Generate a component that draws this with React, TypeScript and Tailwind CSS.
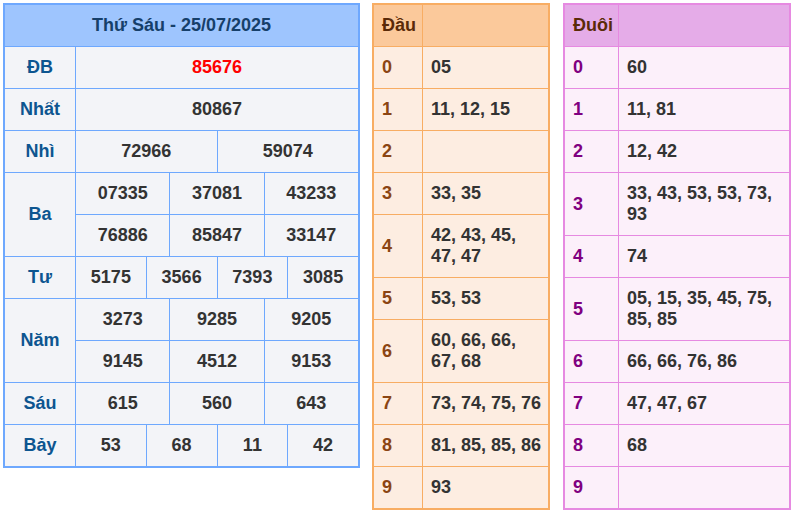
import React from 'react';

type Row = { label: string; values: string[]; span?: string; red?: boolean };

// each group of values fills the 12 columns of the number area
const groups: { label: string; lines: string[][]; red?: boolean }[] = [
  { label: 'ĐB', lines: [['85676']], red: true },
  { label: 'Nhất', lines: [['80867']] },
  { label: 'Nhì', lines: [['72966', '59074']] },
  { label: 'Ba', lines: [['07335', '37081', '43233'], ['76886', '85847', '33147']] },
  { label: 'Tư', lines: [['5175', '3566', '7393', '3085']] },
  { label: 'Năm', lines: [['3273', '9285', '9205'], ['9145', '4512', '9153']] },
  { label: 'Sáu', lines: [['615', '560', '643']] },
  { label: 'Bảy', lines: [['53', '68', '11', '42']] },
];

const spanFor: Record<number, string> = {
  1: 'col-span-12',
  2: 'col-span-6',
  3: 'col-span-4',
  4: 'col-span-3',
};

const dau = [
  ['0', '05'],
  ['1', '11, 12, 15'],
  ['2', ''],
  ['3', '33, 35'],
  ['4', '42, 43, 45, 47, 47'],
  ['5', '53, 53'],
  ['6', '60, 66, 66, 67, 68'],
  ['7', '73, 74, 75, 76'],
  ['8', '81, 85, 85, 86'],
  ['9', '93'],
];

const duoi = [
  ['0', '60'],
  ['1', '11, 81'],
  ['2', '12, 42'],
  ['3', '33, 43, 53, 53, 73, 93'],
  ['4', '74'],
  ['5', '05, 15, 35, 45, 75, 85, 85'],
  ['6', '66, 66, 76, 86'],
  ['7', '47, 47, 67'],
  ['8', '68'],
  ['9', ''],
];

function ResultTable() {
  return (
    <div className="w-[357px] border-2 border-[#6ea8fe] bg-[#6ea8fe] grid grid-cols-[70px_repeat(12,minmax(0,1fr))] gap-px self-start">
      <div className="col-span-full h-[41px] bg-[#9ec5fe] flex items-center justify-center text-[#163f6a]">
        Thứ Sáu - 25/07/2025
      </div>
      {groups.map((g) => (
        <React.Fragment key={g.label}>
          <div
            className={`bg-[#f3f4f8] flex items-center justify-center text-[#0d5590] ${
              g.lines.length === 2 ? 'row-span-2' : ''
            }`}
          >
            {g.label}
          </div>
          {g.lines.map((line, li) =>
            line.map((v, vi) => (
              <div
                key={`${li}-${vi}`}
                className={`${spanFor[line.length]} h-[41px] bg-[#f3f4f8] flex items-center justify-center ${
                  g.red ? 'text-[#ff0000]' : 'text-[#333333]'
                }`}
              >
                {v}
              </div>
            ))
          )}
        </React.Fragment>
      ))}
    </div>
  );
}

interface LotoProps {
  title: string;
  rows: string[][];
  firstCol: string;
  border: string;
  head: string;
  cell: string;
  num: string;
}

function LotoTable({ title, rows, firstCol, border, head, cell, num }: LotoProps) {
  return (
    <div className={`grid ${firstCol} gap-px border-2 ${border} self-start`}>
      <div className={`${head} h-[41px] flex items-center pl-2 text-[#5a2a08]`}>{title}</div>
      <div className={head} />
      {rows.map(([k, v]) => (
        <React.Fragment key={k}>
          <div className={`${cell} ${num} min-h-[41px] flex items-center pl-2`}>{k}</div>
          <div className={`${cell} min-h-[41px] flex items-center pl-2 pr-1 py-[10px] leading-[21px] text-[#333333]`}>
            {v}
          </div>
        </React.Fragment>
      ))}
    </div>
  );
}

export default function App() {
  return (
    <div className="w-[795px] h-[512px] bg-white p-[3px] flex font-['Liberation_Sans',Arial,sans-serif] font-bold text-[18px]">
      <ResultTable />
      <div className="w-[178px] ml-[12px]">
        <LotoTable
          title="Đầu"
          rows={dau}
          firstCol="grid-cols-[48px_minmax(0,1fr)]"
          border="border-[#f8ad63] bg-[#f8ad63]"
          head="bg-[#fbc99b]"
          cell="bg-[#fdede1]"
          num="text-[#8b4513]"
        />
      </div>
      <div className="w-[228px] ml-[13px]">
        <LotoTable
          title="Đuôi"
          rows={duoi}
          firstCol="grid-cols-[53px_minmax(0,1fr)]"
          border="border-[#e68ae1] bg-[#e68ae1]"
          head="bg-[#e5ace8]"
          cell="bg-[#fcf0fa]"
          num="text-[#800080]"
        />
      </div>
    </div>
  );
}
